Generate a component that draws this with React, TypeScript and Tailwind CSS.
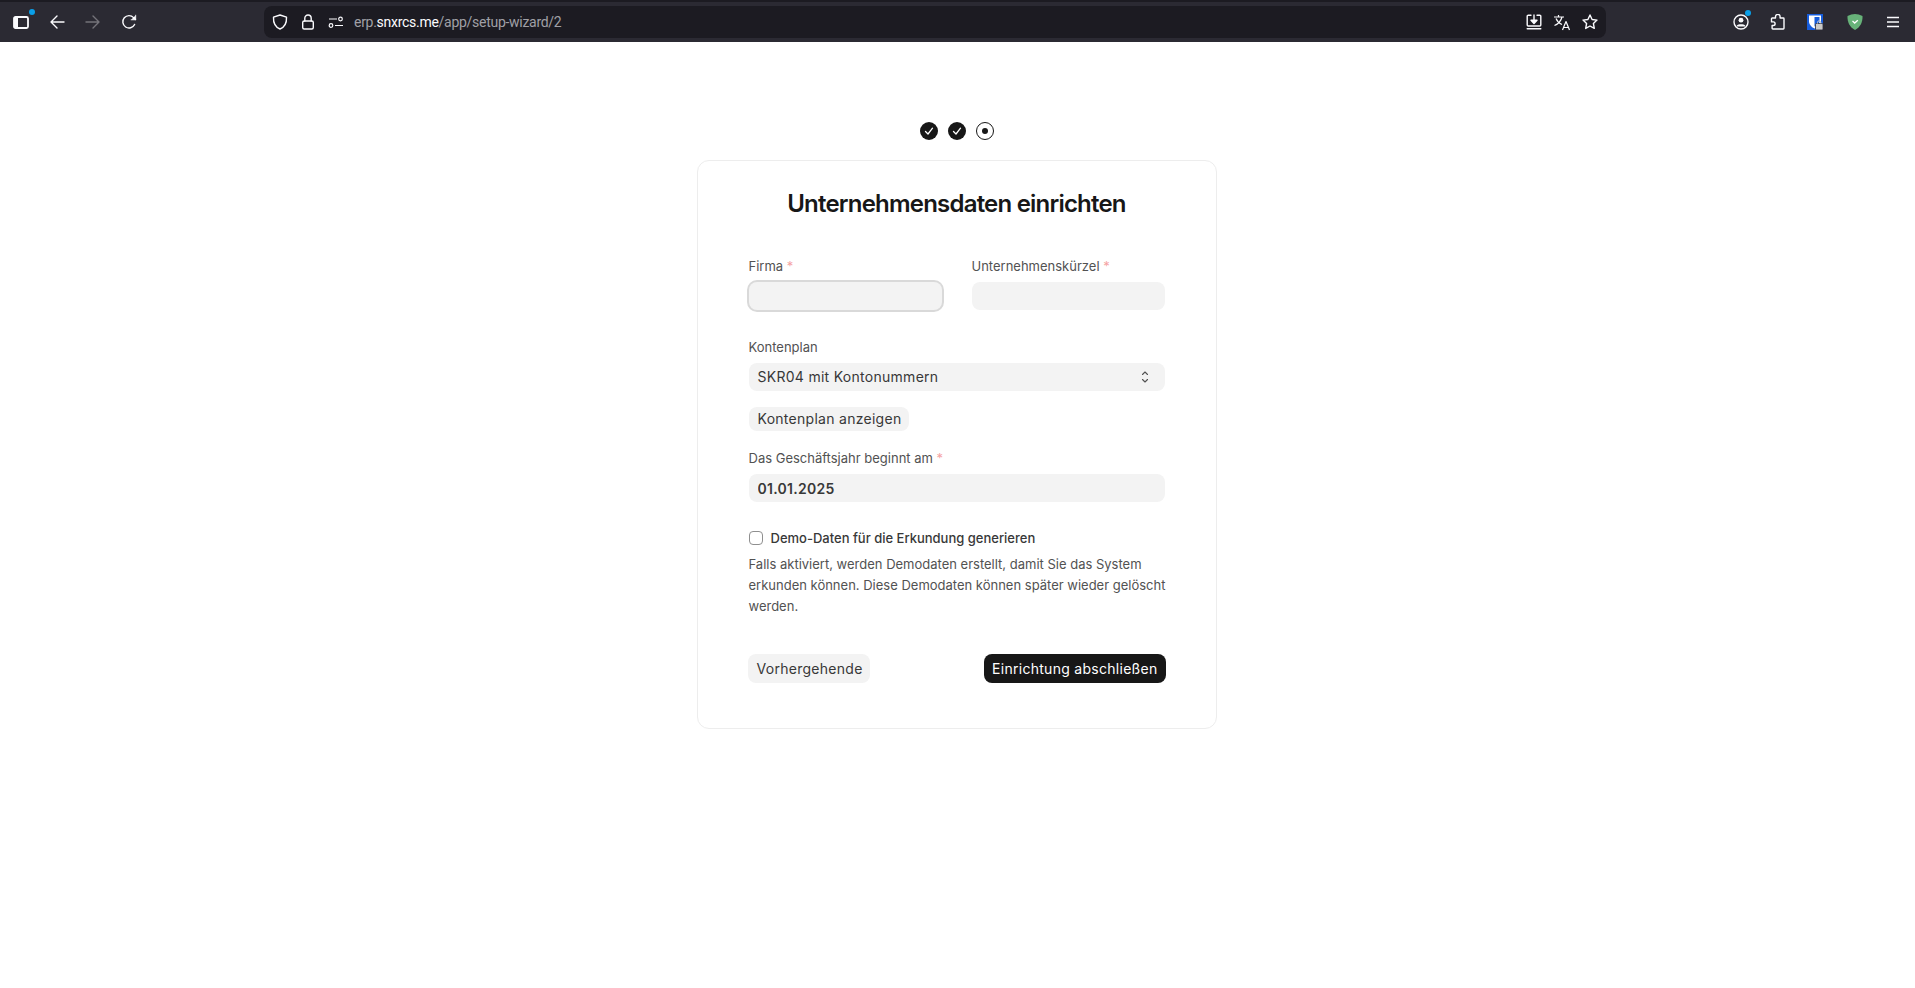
import React from 'react';

const stroke = { fill: 'none', stroke: 'currentColor', strokeWidth: 1.4, strokeLinecap: 'round', strokeLinejoin: 'round' } as const;

const SidebarIcon = () => (
  <svg width="16" height="13" viewBox="0 0 16 13">
    <rect x="1" y="1" width="14" height="11" rx="1.500" fill="none" stroke="#fbfbfe" strokeWidth="1.800" />
    <path d="M1 1h4v11H1z" fill="#fbfbfe" />
  </svg>
);

const Arrow = ({ flip = false }: { flip?: boolean }) => (
  <svg width="16" height="16" viewBox="0 0 16 16" className={flip ? 'rotate-180' : ''} {...stroke}>
    <path d="M2 8h13M8 2 2 8l6 6" />
  </svg>
);

const Reload = () => (
  <svg width="16" height="16" viewBox="0 0 16 16" {...stroke}>
    <path d="M13.6 10.5A6.2 6.2 0 1 1 12.6 3.6L14.5 5.6" />
    <path d="M14.7 1.2v4.6h-4.6" fill="#fbfbfe" strokeWidth="0.8" />
  </svg>
);

const Shield = () => (
  <svg width="16" height="16" viewBox="0 0 16 16" {...stroke}>
    <path d="M8 1 14.5 3.2C14.8 9 12.6 13 8 15 3.4 13 1.2 9 1.5 3.2Z" />
  </svg>
);

const Lock = () => (
  <svg width="14" height="16" viewBox="0 0 14 16" {...stroke}>
    <path d="M3.8 7V4.2a3.2 3.2 0 0 1 6.4 0V7" />
    <rect x="1.7" y="7" width="10.6" height="8" rx="1.5" />
  </svg>
);

const Tune = () => (
  <svg width="16" height="12" viewBox="0 0 16 12" fill="none" stroke="currentColor" strokeWidth="1.2">
    <path d="M1 3h8M7 9.5h8" />
    <circle cx="12.5" cy="3" r="1.8" />
    <circle cx="3" cy="9.5" r="1.8" />
  </svg>
);

const SaveIcon = () => (
  <svg width="16" height="16" viewBox="0 0 16 16" {...stroke}>
    <path d="M5 1.2H2.2a1 1 0 0 0-1 1V11a1 1 0 0 0 1 1h11.6a1 1 0 0 0 1-1V2.2a1 1 0 0 0-1-1H11" />
    <path d="M1.2 14.8h13.6" />
    <path d="M8 1v6" />
    <path d="M5 6.2h6L8 9.4Z" fill="#fbfbfe" />
  </svg>
);

const Translate = () => (
  <svg width="18" height="17" viewBox="0 0 18 17" fill="none" stroke="currentColor" strokeWidth="1.2" strokeLinejoin="round">
    <path d="M1 3h10M5.5 1v2M9 3C8 7 5 10 1.5 11.5M3 4.5C4.2 7.5 6.5 9.5 9 10.5" />
    <path d="M9.5 16 13 7.5 16.5 16M10.7 13.5h4.6" />
  </svg>
);

const Star = () => (
  <svg width="16" height="16" viewBox="0 0 16 16" {...stroke}>
    <path d="M8 1l2.1 4.5 4.9.6-3.6 3.4.9 4.9L8 12l-4.3 2.4.9-4.9L1 6.100l4.900-.6Z" />
  </svg>
);

const Account = () => (
  <svg width="16" height="16" viewBox="0 0 16 16" fill="none" stroke="currentColor" strokeWidth="1.4">
    <circle cx="8" cy="8" r="7" />
    <circle cx="8" cy="6.200" r="2.400" fill="currentColor" stroke="none" />
    <path d="M3.800 11.500C5 9.800 11 9.800 12.200 11.500V12.600H3.800Z" fill="currentColor" stroke="none" />
  </svg>
);

const Puzzle = () => (
  <svg width="16" height="16" viewBox="0 0 16 16" {...stroke}>
    <path d="M5.500 4V2.700a2.300 2.300 0 0 1 4.600 0V4h3.200a.7.7 0 0 1 .7.700V14.300a.7.7 0 0 1-.7.700H2.800a.7.7 0 0 1-.7-.700V11.500h1.200a1.800 1.800 0 0 0 0-3.600H1.500V4.700a.7.7 0 0 1 .7-.7Z" />
  </svg>
);

const VaultBadge = () => (
  <svg width="16" height="16" viewBox="0 0 16 16">
    <rect width="16" height="16" fill="#175ddc" />
    <path d="M2 1.500h12v6C14 10.500 10 13.500 7.500 14.500 5 13.500 2 10.500 2 7.500Z" fill="#fff" />
    <path d="M7.500 3h5v4.500C12.500 9.500 9.500 11.500 7.500 12.500Z" fill="#175ddc" />
    <rect x="8.500" y="9.500" width="7.500" height="6.500" rx="1" fill="#c9c9c9" stroke="#2b2a33" strokeWidth="0.800" />
    <path d="M10.500 9.500V8.500a1.700 1.700 0 0 1 3.400 0v1" fill="none" stroke="#c9c9c9" strokeWidth="1" />
  </svg>
);

const AdShield = () => (
  <svg width="16" height="16" viewBox="0 0 16 16">
    <path d="M8 0C10.500 0 13 .7 15.500 2 15.800 8 13.500 13 8 16 2.500 13 .2 8 .5 2 3 .7 5.500 0 8 0Z" fill="#67b279" />
    <path d="M5.500 7 7.700 9 10.800 6.200" fill="none" stroke="#fff" strokeWidth="1.300" />
  </svg>
);

const Menu = () => (
  <svg width="14" height="12" viewBox="0 0 14 12" stroke="currentColor" strokeWidth="1.300">
    <path d="M1 1.500h12M1 6h12M1 10.500h12" />
  </svg>
);

const Slot = ({ className = '', children }: { className?: string; children: React.ReactNode }) => (
  <div className={`flex items-center justify-center shrink-0 ${className}`}>{children}</div>
);

const Toolbar = () => (
  <div className="h-[42px] bg-[#2b2a33] border-t-2 border-[#1c1b22] flex items-center pl-[3px] text-[#fbfbfe]">
    <Slot className="relative w-9 h-8">
      <SidebarIcon />
      <span className="absolute right-[4px] top-[3px] w-[6px] h-[6px] rounded-full bg-[#0a9fe8]" />
    </Slot>
    <Slot className="w-9 h-8"><Arrow /></Slot>
    <Slot className="w-9 h-8 text-[#74737a]"><Arrow flip /></Slot>
    <Slot className="w-9 h-8"><Reload /></Slot>
    <div className="ml-[117px] w-[1342px] h-8 rounded-lg bg-[#1c1b22] flex items-center pl-[2px] pr-[2px]">
      <Slot className="w-7"><Shield /></Slot>
      <Slot className="w-7"><Lock /></Slot>
      <Slot className="w-7"><Tune /></Slot>
      <div className="ml-[4px] flex-1 text-[14px] font-[Roboto,sans-serif] text-[#a0a0a6] tracking-[-0.28px]">
        erp.<span className="text-[#fbfbfe]">snxrcs.me</span>/app/setup-wizard/2
      </div>
      <Slot className="w-7"><SaveIcon /></Slot>
      <Slot className="w-7"><Translate /></Slot>
      <Slot className="w-7"><Star /></Slot>
    </div>
    <Slot className="relative ml-[125px] w-5 h-8">
      <Account />
      <span className="absolute right-0 top-[4px] w-[6px] h-[6px] rounded-full bg-[#0a9fe8]" />
    </Slot>
    <Slot className="ml-[17px] w-5 h-8"><Puzzle /></Slot>
    <Slot className="ml-[17px] w-5 h-8"><VaultBadge /></Slot>
    <Slot className="ml-[20px] w-5 h-8"><AdShield /></Slot>
    <Slot className="ml-[18px] w-5 h-8"><Menu /></Slot>
  </div>
);

const StepDone = () => (
  <div className="w-[18px] h-[18px] rounded-full bg-[#171717] flex items-center justify-center">
    <svg width="10" height="10" viewBox="0 0 10 10" fill="none" stroke="#fff" strokeWidth="1.300" strokeLinecap="round" strokeLinejoin="round">
      <path d="M1.500 5.500 4 8 8.500 2.200" />
    </svg>
  </div>
);

const Stepper = () => (
  <div className="flex gap-[10px]">
    <StepDone />
    <StepDone />
    <div className="w-[18px] h-[18px] rounded-full border border-[#171717] flex items-center justify-center">
      <span className="w-[6px] h-[6px] rounded-full bg-[#171717]" />
    </div>
  </div>
);

const Label = ({ text, required = false }: { text: string; required?: boolean }) => (
  <div className="h-4 mb-2 text-[13px] leading-4 text-[#525252]">
    {text}
    {required && <span className="text-[#f5a3a3]"> *</span>}
  </div>
);

const fieldClass = 'w-full h-7 rounded-lg bg-[#f3f3f3] pl-[9px] pr-2 text-[14px] text-[#383838] tracking-[0.02em] outline-none';

const App = () => {
  return (
    <div className="min-h-[988px] bg-white font-[Inter,sans-serif]">
      <Toolbar />
      <div className="flex flex-col items-center pt-[80px] pr-[2px]">
        <Stepper />
        <div className="mt-5 w-[520px] h-[569px] rounded-xl border border-[#ededed] px-[51px] pt-[27px]">
          <h1 className="text-center text-2xl leading-8 font-semibold text-[#171717] tracking-[-0.033em]">
            Unternehmensdaten einrichten
          </h1>
          <div className="mt-[38px] flex justify-between">
            <div className="w-[193px]">
              <Label text="Firma" required />
              <input className={`${fieldClass} ring-2 ring-[#d9d9d9] ring-offset-0`} />
            </div>
            <div className="w-[193px]">
              <Label text="Unternehmenskürzel" required />
              <input className={fieldClass} />
            </div>
          </div>
          <div className="mt-[29px]">
            <Label text="Kontenplan" />
            <div className={`${fieldClass} flex items-center justify-between`}>
              <span className="-mt-px">SKR04 mit Kontonummern</span>
              <svg width="8" height="14" viewBox="0 0 8 14" fill="none" stroke="#525252" strokeWidth="1.100" strokeLinecap="round" strokeLinejoin="round" className="mr-[8px]">
                <path d="M1.500 4.500 4 2l2.500 2.500M1.500 9.500 4 12l2.500-2.500" />
              </svg>
            </div>
          </div>
          <button className="mt-4 block h-6 rounded-lg bg-[#f3f3f3] pl-[9px] pr-2 pb-px text-[14px] text-[#383838] tracking-[0.02em]">
            Kontenplan anzeigen
          </button>
          <div className="mt-[19px]">
            <Label text="Das Geschäftsjahr beginnt am" required />
            <input readOnly value="01.01.2025" className={`${fieldClass} font-semibold`} />
          </div>
          <label className="mt-[28px] flex items-center h-4">
            <input type="checkbox" className="appearance-none w-[14px] h-[14px] rounded-[4px] border border-[#8f8f8f] bg-white" />
            <span className="ml-2 pt-px text-[13px] font-medium text-[#383838]">
              Demo-Daten für die Erkundung generieren
            </span>
          </label>
          <p className="mt-2 -mr-[4px] text-[13px] leading-[21px] text-[#525252]">
            Falls aktiviert, werden Demodaten erstellt, damit Sie das System erkunden können. Diese Demodaten können später wieder gelöscht werden.
          </p>
          <div className="mt-[37px] flex justify-between items-center">
            <button className="-ml-px h-[29px] rounded-lg bg-[#f3f3f3] pl-[9px] pr-[7px] text-[14px] text-[#383838] tracking-[0.02em]">
              Vorhergehende
            </button>
            <button className="-mr-px h-[29px] rounded-lg bg-[#171717] px-2 text-[14px] text-white tracking-[0.02em]">
              Einrichtung abschließen
            </button>
          </div>
        </div>
      </div>
    </div>
  );
};

export default App;
